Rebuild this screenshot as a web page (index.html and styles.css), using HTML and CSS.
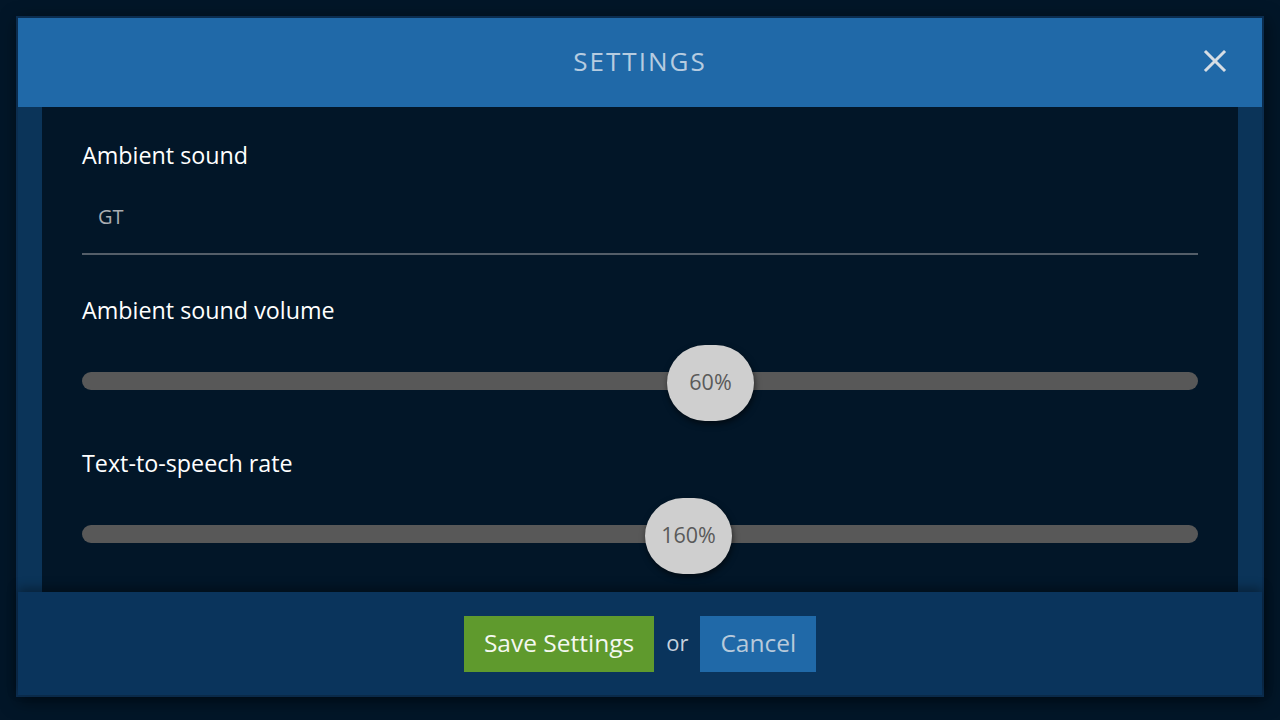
FILE: index.html
```
<!DOCTYPE html>
<html lang="en">
<head>
  <meta charset="UTF-8">
  <title>Settings</title>
  <link rel="stylesheet" href="styles.css">
</head>
<body>

  <div class="modal">
    <div class="modal-header">
      <h1 class="modal-title">SETTINGS</h1>
      <button class="close-btn" aria-label="Close">
        <svg width="24" height="24" viewBox="0 0 24 24">
          <path d="M3 3 L21 21 M21 3 L3 21" stroke="#d6dde4" stroke-width="3" stroke-linecap="square" fill="none"/>
        </svg>
      </button>
    </div>

    <div class="modal-body">
      <div class="panel">
        <label class="field-label">Ambient sound</label>
        <div class="select-field">GT</div>

        <label class="field-label spaced">Ambient sound volume</label>
        <div class="slider">
          <div class="track"></div>
          <div class="thumb" style="left: 585px;">60%</div>
        </div>

        <label class="field-label spaced-sm">Text-to-speech rate</label>
        <div class="slider">
          <div class="track"></div>
          <div class="thumb" style="left: 563px;">160%</div>
        </div>
      </div>
    </div>

    <div class="modal-footer">
      <button class="btn btn-save">Save Settings</button>
      <span class="or">or</span>
      <button class="btn btn-cancel">Cancel</button>
    </div>
  </div>

</body>
</html>
```

FILE: styles.css
```
body {
  margin: 0;
  background-color: #021628;
  font-family: "Open Sans", "Noto Sans", sans-serif;
  height: 720px;
  overflow: hidden;
}

.modal {
  margin: 16px;
  height: 677px;
  border: 2px solid #0b2d4f;
  background-color: #0b3459;
  display: flex;
  flex-direction: column;
  box-shadow: 2px 4px 16px rgba(0, 0, 0, 0.5);
}

.modal-header {
  height: 89px;
  flex-shrink: 0;
  background-color: #2069a8;
  display: flex;
  align-items: center;
  justify-content: center;
  position: relative;
}

.modal-title {
  margin: 0 0 4px;
  font-weight: 400;
  font-size: 26px;
  letter-spacing: 2px;
  color: #b6cce0;
}

.close-btn {
  position: absolute;
  right: 35px;
  top: 31px;
  width: 24px;
  height: 24px;
  padding: 0;
  border: none;
  background: none;
  cursor: pointer;
}

.modal-body {
  flex: 1;
  padding: 0 24px;
  display: flex;
}

.panel {
  flex: 1;
  background-color: #021628;
  padding: 33px 40px 0;
}

.field-label {
  display: block;
  font-size: 23.3px;
  line-height: 30px;
  color: #ffffff;
}

.field-label.spaced {
  margin-top: 40px;
}

.field-label.spaced-sm {
  margin-top: 27px;
}

.select-field {
  height: 24px;
  padding: 35px 16px 24px;
  font-size: 20px;
  line-height: 24px;
  color: #a9adb2;
  border-bottom: 2px solid #545e69;
}

.slider {
  position: relative;
  height: 76px;
  margin-top: 20px;
}

.track {
  position: absolute;
  left: 0;
  right: 0;
  top: 27px;
  height: 18px;
  border-radius: 9px;
  background-color: #585858;
}

.thumb {
  position: absolute;
  top: 0;
  width: 87px;
  height: 73px;
  padding-bottom: 3px;
  border-radius: 38px;
  background-color: #cfcfcf;
  color: #5a5a5a;
  font-size: 21.5px;
  display: flex;
  align-items: center;
  justify-content: center;
  box-shadow: 1px 3px 6px rgba(0, 0, 0, 0.55);
}

.modal-footer {
  height: 103px;
  flex-shrink: 0;
  background-color: #0a345c;
  display: flex;
  align-items: center;
  justify-content: center;
  box-shadow: 0 -4px 10px rgba(0, 0, 0, 0.35);
  position: relative;
}

.btn {
  height: 56px;
  padding: 0 20px 3px;
  border: none;
  font-family: inherit;
  font-size: 24.5px;
  cursor: pointer;
}

.btn-save {
  background-color: #5f9a2d;
  color: #f4f8f0;
}

.btn-cancel {
  background-color: #2069a8;
  color: #b8cadb;
}

.or {
  margin: 0 12px 4px;
  font-size: 22px;
  color: #c6d2de;
}
```
